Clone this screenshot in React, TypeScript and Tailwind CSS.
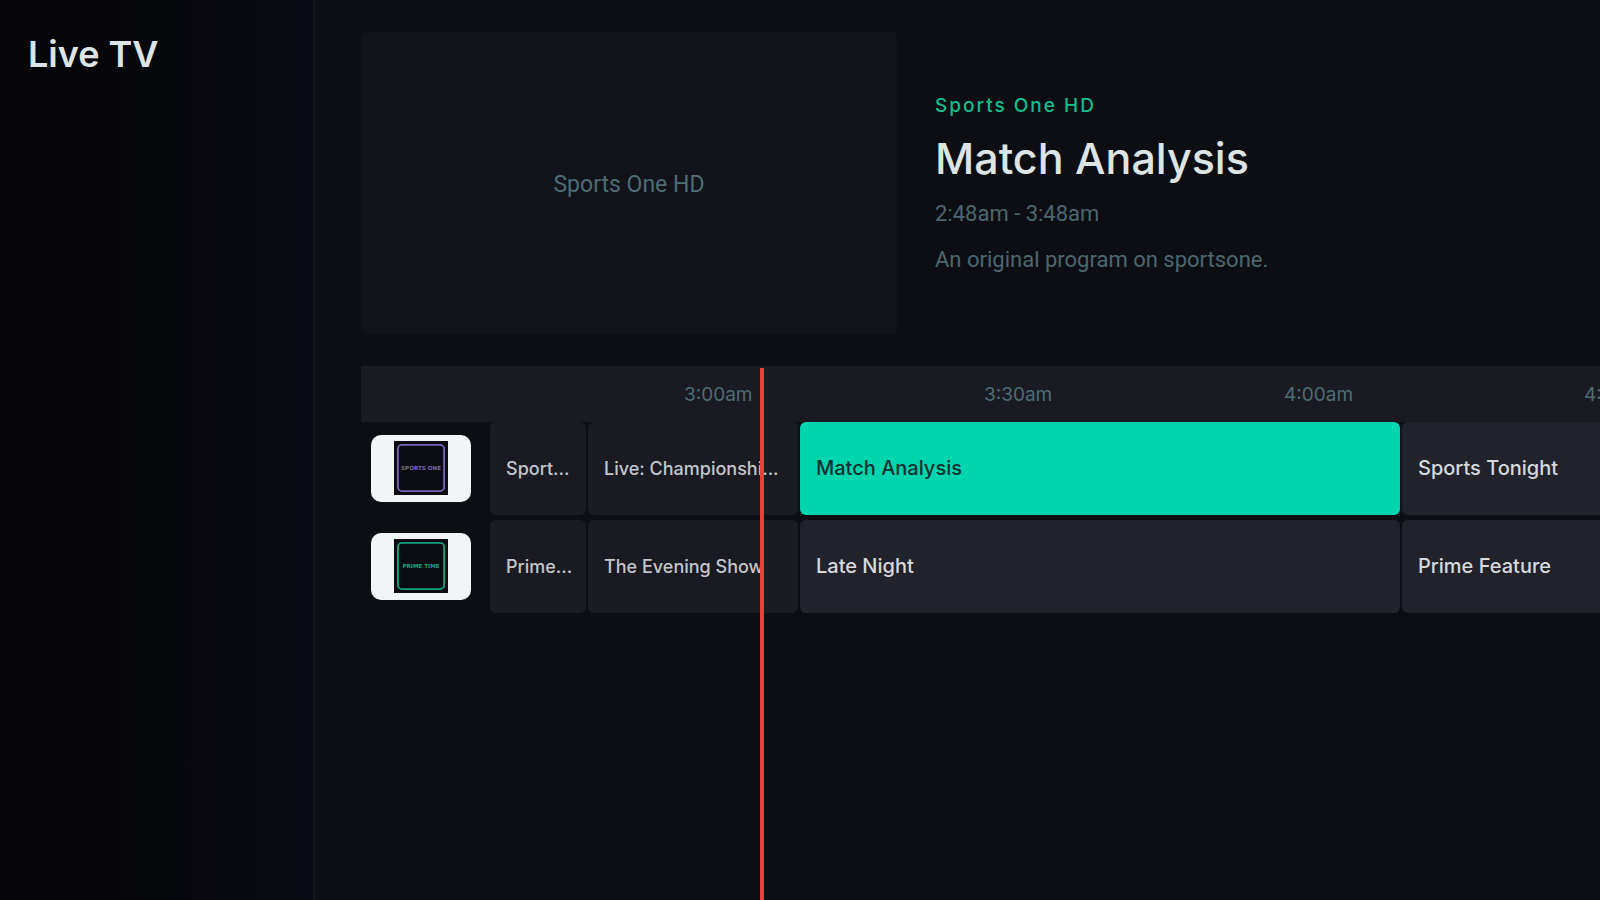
type Program = { title: string; width: string; state: "past" | "next" | "focused" };
type Channel = { id: string; logo: string; color: string; programs: Program[] };

const channels: Channel[] = [
  {
    id: "sportsone",
    logo: "SPORTS ONE",
    color: "#7a63b8",
    programs: [
      { title: "Sport...", width: "w-24", state: "past" },
      { title: "Live: Championshi...", width: "w-[210px]", state: "past" },
      { title: "Match Analysis", width: "w-[600px]", state: "focused" },
      { title: "Sports Tonight", width: "w-[600px]", state: "next" },
    ],
  },
  {
    id: "primetime",
    logo: "PRIME TIME",
    color: "#10a57c",
    programs: [
      { title: "Prime...", width: "w-24", state: "past" },
      { title: "The Evening Show", width: "w-[210px]", state: "past" },
      { title: "Late Night", width: "w-[600px]", state: "next" },
      { title: "Prime Feature", width: "w-[600px]", state: "next" },
    ],
  },
];

const times = ["3:00am", "3:30am", "4:00am", "4:30am"];

const cellStyles = {
  past: "bg-[#1a1a23] text-[#c3c7cb] text-[18px] font-medium",
  next: "bg-[#22222d] text-[#d6dadd] text-[20px] font-medium",
  focused: "bg-[#00d5ae] text-[#06302f] text-[20px] font-medium",
};

function ChannelLogo({ name, color }: { name: string; color: string }) {
  return (
    <div className="flex h-[67px] w-[100px] shrink-0 items-center justify-center rounded-[10px] bg-[#f3f4f6]">
      <svg viewBox="0 0 54 54" className="size-[54px]" role="img" aria-label={name}>
        <rect width="54" height="54" fill="#0a0b13" />
        <rect x="3.9" y="3.9" width="46.2" height="46.2" rx="4" fill="none" stroke={color} strokeWidth="1.8" />
        <text
          x="27"
          y="29"
          textAnchor="middle"
          fill={color}
          fontFamily="'DejaVu Sans', sans-serif"
          fontWeight="700"
          fontSize="5.6"
        >
          {name}
        </text>
      </svg>
    </div>
  );
}

function ChannelRow({ channel }: { channel: Channel }) {
  return (
    <div className="flex h-[93px] items-center">
      <div className="flex w-[129px] shrink-0 pl-[10px]">
        <ChannelLogo name={channel.logo} color={channel.color} />
      </div>
      <div className="flex h-full gap-0.5">
        {channel.programs.map((p) => (
          <button
            key={p.title}
            type="button"
            className={`h-full shrink-0 rounded-md px-4 text-left whitespace-nowrap ${p.width} ${cellStyles[p.state]}`}
          >
            {p.title}
          </button>
        ))}
      </div>
    </div>
  );
}

export default function App() {
  return (
    <div className="flex min-h-screen bg-[#0d0e13] font-['Inter',sans-serif] text-[#dde4e6]">
      <aside className="w-[315px] shrink-0 border-r-2 border-[#15151e] bg-linear-to-r from-[#040407] via-[#07080c] to-[#0a0a14] px-7 pt-8">
        <h1 className="text-[36px] leading-[44px] font-semibold">Live TV</h1>
      </aside>

      <main className="flex min-w-0 flex-1 flex-col overflow-hidden pt-8 pl-[46px]">
        <section className="flex items-center gap-[38px]">
          <div className="flex aspect-video w-[536px] shrink-0 items-center justify-center rounded-md bg-[#12121b] pt-1 font-['Roboto',sans-serif] text-[23px] text-[#4d6d75]">
            Sports One HD
          </div>
          <div className="flex min-w-0 flex-col pt-0.5">
            <p className="text-[19px] leading-6 font-medium tracking-[2px] text-[#0fbf8f]">Sports One HD</p>
            <h2 className="mt-3 text-[43px] leading-[56px] font-medium">Match Analysis</h2>
            <p className="mt-[14px] font-['Roboto',sans-serif] text-[22px] leading-7 text-[#4b6770]">
              2:48am - 3:48am
            </p>
            <p className="mt-[18px] font-['Roboto',sans-serif] text-[22px] leading-7 text-[#4b6770]">
              An original program on sportsone.
            </p>
          </div>
        </section>

        <section aria-label="Program guide" className="relative mt-8 flex-1">
          <div className="flex h-14 items-center overflow-hidden bg-[#1a1a23] pt-1 pl-[323px] text-[19px] text-[#4d6d75]">
            {times.map((t) => (
              <time key={t} className="w-[300px] shrink-0">
                {t}
              </time>
            ))}
          </div>
          <div className="flex flex-col gap-[5px]">
            {channels.map((c) => (
              <ChannelRow key={c.id} channel={c} />
            ))}
          </div>
          <div className="absolute top-0.5 bottom-0 left-[399px] w-1 bg-[#ec3f3a]" />
        </section>
      </main>
    </div>
  );
}
